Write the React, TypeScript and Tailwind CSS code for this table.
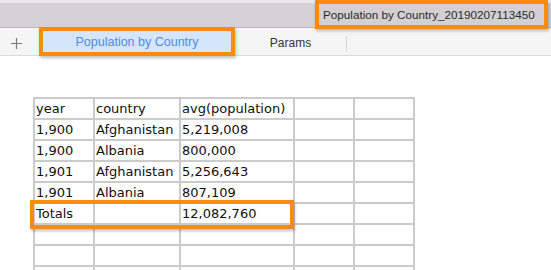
import React from "react";

const rows: string[][] = [
  ["year", "country", "avg(population)", "", ""],
  ["1,900", "Afghanistan", "5,219,008", "", ""],
  ["1,900", "Albania", "800,000", "", ""],
  ["1,901", "Afghanistan", "5,256,643", "", ""],
  ["1,901", "Albania", "807,109", "", ""],
  ["Totals", "", "12,082,760", "", ""],
  ["", "", "", "", ""],
  ["", "", "", "", ""],
  ["", "", "", "", ""],
];

const colWidths = [60, 86, 114, 60, 60];

export default function App() {
  return (
    <div className="relative h-[270px] w-[551px] overflow-hidden bg-white font-['Liberation_Sans',Arial,sans-serif]">
      {/* title band */}
      <div className="flex h-[28px] justify-end border-b border-[#bab8ba] bg-[#d4d2d4] shadow-[inset_0_3px_0_#eae8ea]">
        <div className="relative z-10 mr-[3px] h-[29px] w-[233px] border-4 border-[#fb8b0f] bg-[#d2d0d2] pl-[4px] pt-[3px] text-[11.7px] leading-[16px] text-[#2b2b2b] shadow-[1px_2px_3px_rgba(0,0,0,0.25)]">
          Population by Country_20190207113450
        </div>
      </div>

      {/* tab bar */}
      <div className="flex h-[28px] items-stretch border-b border-[#dcdcdc] bg-[#f5f5f5]">
        <div className="flex w-[39px] items-center pl-[11px] pt-[3px]">
          <svg width="11" height="11" viewBox="0 0 11 11">
            <path d="M5.5 0v11M0 5.5h11" stroke="#7a7a7a" strokeWidth="1.2" />
          </svg>
        </div>
        <div className="relative z-10 -mt-px flex h-[29px] w-[196px] items-center justify-center border-4 border-[#fb8b0f] bg-[#d5e5fb] pt-[2px] text-[12.5px] text-[#4a8fe3] shadow-[1px_2px_3px_rgba(0,0,0,0.25)]">
          Population by Country
        </div>
        <div className="flex w-[111px] items-center justify-center pt-[2px] text-[12px] text-[#333]">
          Params
        </div>
        <div className="mt-[8px] h-[16px] w-px bg-[#d6d6d6]" />
      </div>

      {/* data table */}
      <div className="relative ml-[33px] mt-[41px] w-fit">
        <table className="table-fixed border-collapse font-['DejaVu_Sans',Verdana,sans-serif] text-[13px] text-[#0f0f0f]">
          <colgroup>
            {colWidths.map((w, i) => (
              <col key={i} style={{ width: w }} />
            ))}
          </colgroup>
          <tbody>
            {rows.map((r, ri) => (
              <tr key={ri} className="h-[21px]">
                {r.map((c, ci) => (
                  <td
                    key={ci}
                    className="overflow-hidden whitespace-nowrap border-2 border-[#cbcbcb] p-0 pl-[1px] leading-[17px]"
                  >
                    {c}
                  </td>
                ))}
              </tr>
            ))}
          </tbody>
        </table>
        {/* totals annotation */}
        <div className="absolute left-[-3px] top-[103px] h-[29px] w-[264px] border-4 border-[#fb8b0f] shadow-[1px_2px_3px_rgba(0,0,0,0.25)]" />
      </div>
    </div>
  );
}
